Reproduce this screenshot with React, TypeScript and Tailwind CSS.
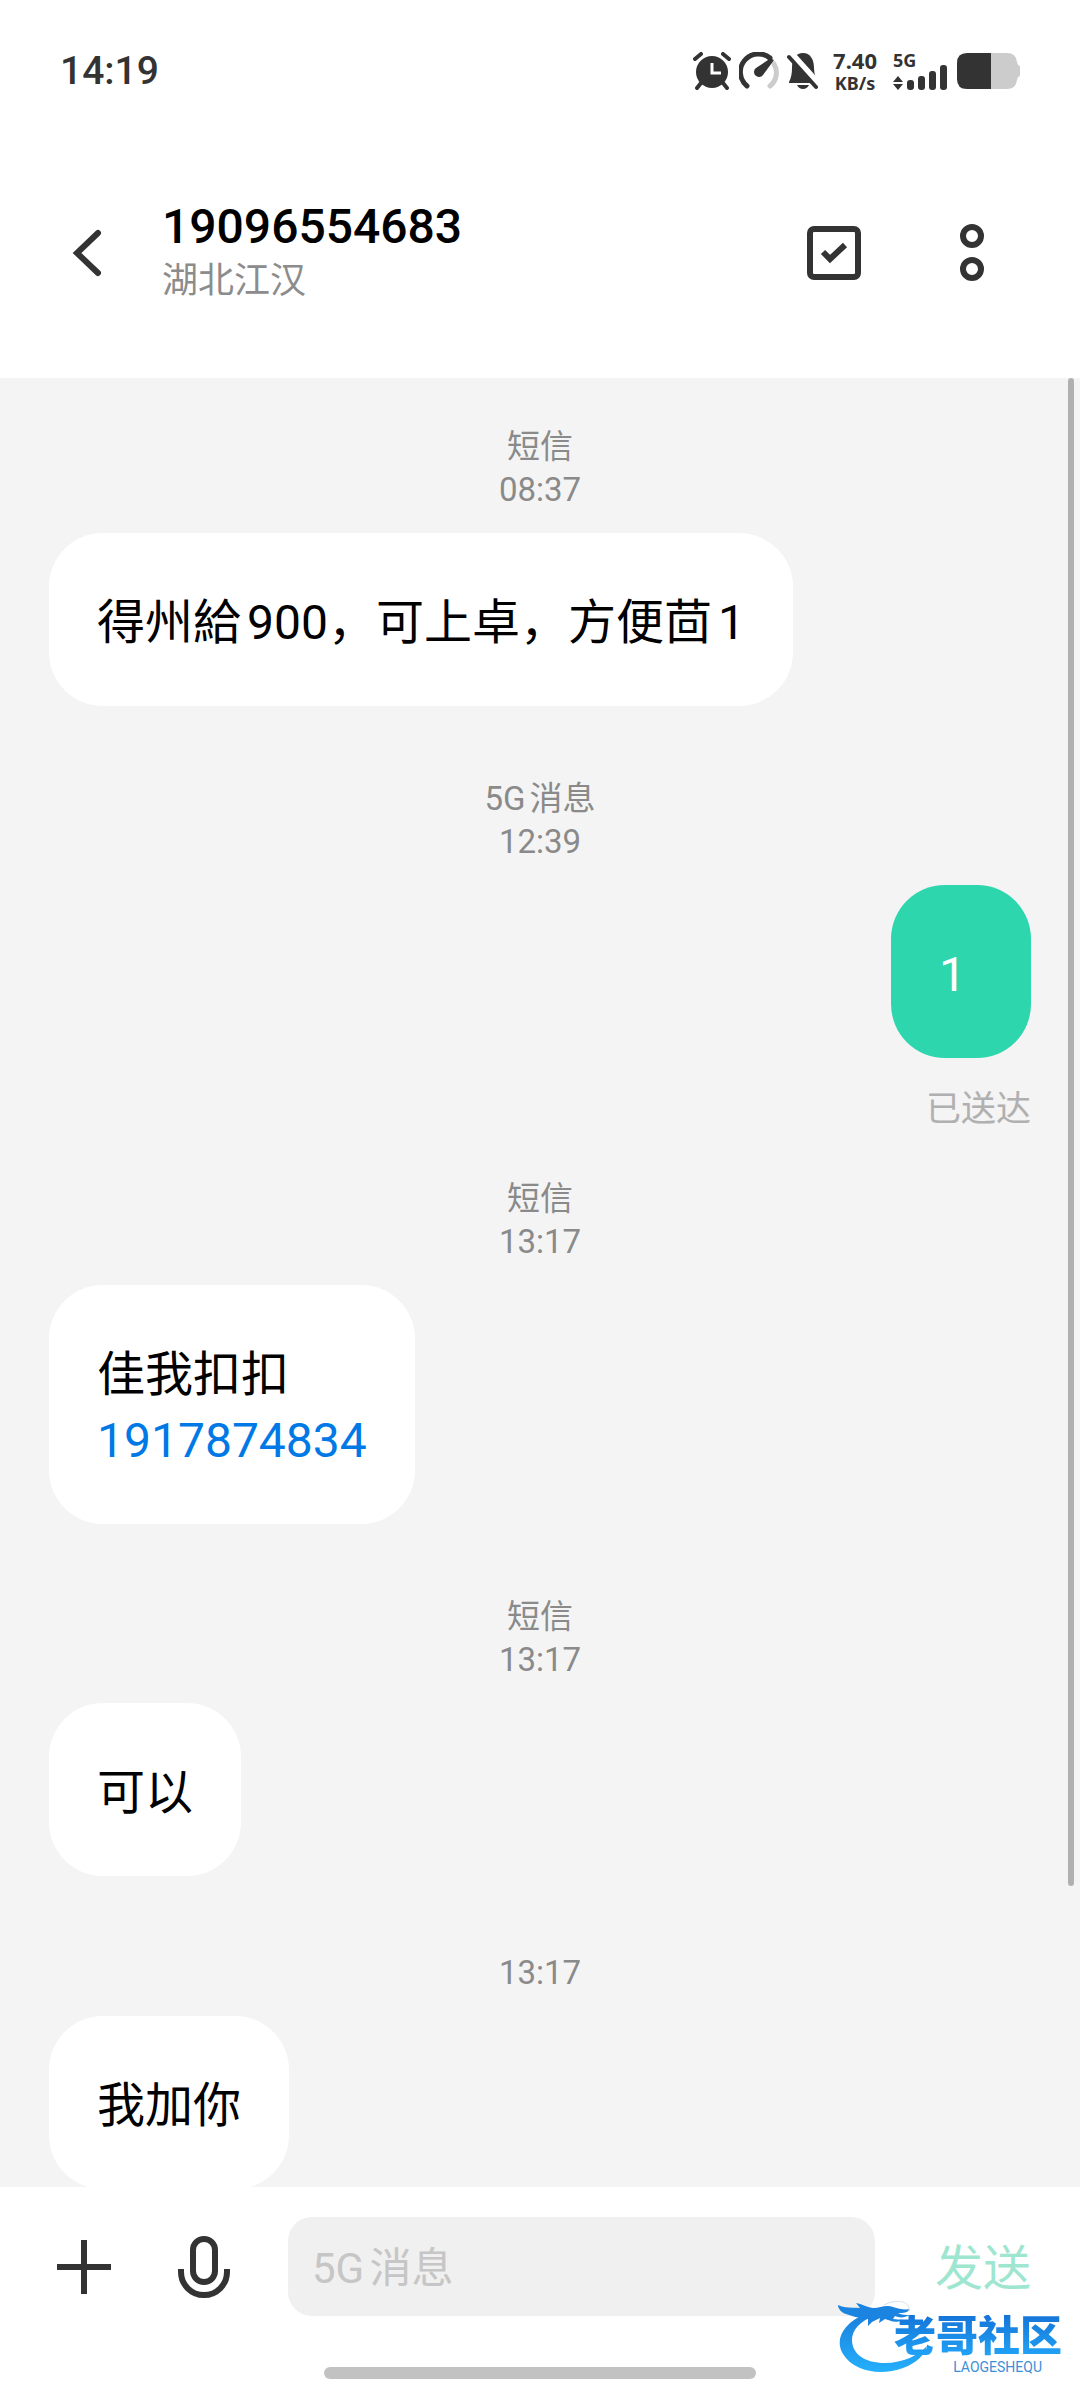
import React, { useState } from 'react';

interface Message {
  id: number;
  text: string;
  time: string;
  channel?: string;
  link?: string;
  sent?: boolean;
  status?: string;
}

const messages: Message[] = [
  { id: 1, channel: '短信', time: '08:37', text: '得州給900，可上卓，方便茴1' },
  { id: 2, channel: '5G消息', time: '12:39', text: '1', sent: true, status: '已送达' },
  { id: 3, channel: '短信', time: '13:17', text: '佳我扣扣', link: '1917874834' },
  { id: 4, channel: '短信', time: '13:17', text: '可以' },
  { id: 5, time: '13:17', text: '我加你' },
];

const StatusBar = () => (
  <div className="flex h-[142px] shrink-0 items-center justify-between px-[60px] text-[#333]">
    <span className="text-[39px] font-medium leading-none">14:19</span>
    <div className="flex items-center">
      <svg width="38" height="38" viewBox="0 0 38 38" fill="none" stroke="#333">
        <circle cx="19" cy="20" r="16" fill="#333" stroke="none" />
        <path d="M8 31l-4 5M30 31l4 5" strokeWidth="4" strokeLinecap="round" />
        <path d="M2 7l6-5M36 7l-6-5" strokeWidth="4" strokeLinecap="round" />
        <path d="M19 11v10h9" stroke="#fff" strokeWidth="3" />
      </svg>
      <svg className="ml-2" width="40" height="38" viewBox="0 0 40 38" fill="none">
        <path d="M8 34A17 17 0 0 1 31 6" stroke="#333" strokeWidth="5" strokeLinecap="round" />
        <path d="M35 12A17 17 0 0 1 31 34" stroke="#ccc" strokeWidth="5" strokeLinecap="round" />
        <path d="M28 5L35 8L24 23a5 5 0 1 1-7-7L29 8z" fill="#333" />
      </svg>
      <svg className="ml-2" width="32" height="38" viewBox="0 0 32 38" fill="none">
        <path d="M2 30c2-4 3-8 3-14C5 7 9 1 16 1s11 6 11 15c0 6 2 10 4 13v2H2z" fill="#333" />
        <path d="M10 33h12q-2 4-6 4t-6-4z" fill="#333" />
        <path d="M5 2l28 31" stroke="#fff" strokeWidth="6" />
        <path d="M2 5l27 30" stroke="#333" strokeWidth="4" strokeLinecap="round" />
      </svg>
      <div className="ml-[14px] mr-[16px] flex flex-col items-center font-['Noto_Sans'] text-[22px] font-bold leading-[24px]">
        <span>7.40</span>
        <span className="text-[18px] leading-[22px]">KB/s</span>
      </div>
      <div className="flex flex-col gap-[1px]">
        <span className="font-['Noto_Sans'] text-[18px] font-bold leading-[14px]">5G</span>
        <svg className="-mt-1" width="55" height="26" viewBox="0 0 55 26" fill="#333">
          <path d="M5 12l5 6H0zM5 26l5-6H0z" />
          <rect x="14" y="16" width="7" height="10" rx="3" />
          <rect x="25" y="12" width="7" height="14" rx="3" />
          <rect x="36" y="7" width="7" height="19" rx="3" />
          <rect x="47" y="1" width="7" height="25" rx="3" />
        </svg>
      </div>
      <svg className="ml-[9px]" width="63" height="36" viewBox="0 0 63 36">
        <path d="M33 0h17q9 0 10 9l1 3q2 0 2 2v8q0 2-2 2l-1 3q-1 9-10 9H33z" fill="#ccc" />
        <path d="M10 0h24v36H10Q0 36 0 26V10Q0 0 10 0z" fill="#333" />
      </svg>
    </div>
  </div>
);

const Header = () => (
  <header className="mb-[14px] flex h-[222px] shrink-0 items-center pl-[70px] pr-[84px]">
    <button type="button" aria-label="返回" className="mr-[58px]">
      <svg width="34" height="48" viewBox="0 0 34 48" fill="none" stroke="#333" strokeWidth="6">
        <path d="M28 4L7 24l21 20" strokeLinecap="round" />
      </svg>
    </button>
    <div className="flex-1 pt-[2px]">
      <h1 className="text-[48px] font-medium leading-[54px] text-black">19096554683</h1>
      <p className="text-[36px] leading-[54px] text-[#8c8c8c]">湖北江汉</p>
    </div>
    <button type="button" aria-label="选择" className="mr-[87px]">
      <svg width="54" height="54" viewBox="0 0 54 54" fill="none" stroke="#333">
        <rect x="3" y="3" width="48" height="48" rx="4" strokeWidth="6" />
        <path d="M16 26l7 7 15-14" strokeWidth="6" />
      </svg>
    </button>
    <button type="button" aria-label="更多" className="px-3">
      <svg width="24" height="58" viewBox="0 0 24 58" fill="none" stroke="#333" strokeWidth="6">
        <circle cx="12" cy="12" r="9" />
        <circle cx="12" cy="45" r="9" />
      </svg>
    </button>
  </header>
);

const MessageItem: React.FC<{ message: Message }> = ({ message }) => {
  const { channel, time, text, link, sent, status } = message;

  return (
    <li className={`flex flex-col ${sent ? 'items-end' : 'items-start'} ${channel ? 'pt-[72px]' : 'pt-[75px]'}`}>
      <div className="mb-[21px] flex flex-col self-center text-center text-[#8a8a8a]">
        {channel && <span className="text-[33px] leading-[42px]">{channel}</span>}
        <time className="text-[33px] leading-[44px]">{time}</time>
      </div>
      <div
        className={`flex min-w-[140px] flex-col rounded-[54px] px-12 pb-[50px] pt-[57px] text-[48px] leading-[66px] ${
          sent ? 'bg-[#2dd6ad] text-white' : 'bg-white text-black'
        }`}
      >
        <span>{text}</span>
        {link && <a href={`tel:${link}`} className="text-[#0079e6]">{link}</a>}
      </div>
      {status && <span className="-mb-[30px] mt-[26px] text-[35px] leading-[52px] text-[#b0b0b0]">{status}</span>}
    </li>
  );
};

const Watermark = () => (
  <div className="pointer-events-none absolute right-[18px] top-[114px] flex h-[76px] w-[224px] flex-col items-end pt-[14px]">
    <svg className="absolute inset-0" width="224" height="76" viewBox="0 0 224 76" fill="none">
      <defs>
        <linearGradient id="ring" x1="0" y1="0" x2="0" y2="1">
          <stop offset="0" stopColor="#1a7fdc" />
          <stop offset="1" stopColor="#24b0fb" />
        </linearGradient>
      </defs>
      <path
        d="M27 13C6 22-4 38 5 53c11 18 38 22 60 14 14-5 22-14 24-22-8 9-24 17-42 17-20 0-33-9-33-23 0-10 8-19 22-24z"
        fill="url(#ring)"
      />
      <path
        d="M0 4c8 4 14 2 22 3l-4-5c6 1 10 4 17 5 8 0 12-4 20-1 6 2 12 3 17 2-2 4-7 4-12 4 4 2 8 2 11 2-4 3-10 3-14 1l-2 3 10 1c-8 4-14 0-18-1l-6 4 1-5-8 4-4 4 0-7c-10-1-16-3-22-5-4-1-8-5-8-9z"
        fill="#1b84e0"
      />
      <path d="M46 4C58-2 72-1 71 10" stroke="#cfe0ee" strokeWidth="1" />
    </svg>
    <span className="relative bg-gradient-to-b from-[#1674d8] to-[#23a6f8] bg-clip-text text-[42px] font-black leading-[44px] text-transparent">
      老哥社区
    </span>
    <span className="relative mr-[20px] text-[14px] leading-[16px] text-[#3d8fd8]">LAOGESHEQU</span>
  </div>
);

const Composer = () => {
  const [draft, setDraft] = useState('');

  return (
    <footer className="relative flex h-[213px] shrink-0 flex-col items-center justify-between bg-white pb-[21px] pt-[30px]">
      <div className="flex h-[99px] w-full items-center pl-[57px] pr-[49px]">
        <button type="button" aria-label="添加">
          <svg width="54" height="54" viewBox="0 0 54 54" stroke="#333" strokeWidth="6">
            <path d="M0 27h54M27 0v54" />
          </svg>
        </button>
        <button type="button" aria-label="语音" className="ml-[67px]">
          <svg width="52" height="62" viewBox="0 0 52 62" fill="none" stroke="#333" strokeWidth="6">
            <rect x="15" y="3" width="22" height="43" rx="11" />
            <path d="M3 33v3a23 23 0 0 0 46 0v-3" />
          </svg>
        </button>
        <input
          type="text"
          aria-label="5G消息"
          placeholder="5G消息"
          value={draft}
          onChange={(e) => setDraft(e.target.value)}
          className="ml-[58px] h-full min-w-0 flex-1 rounded-[24px] bg-[#f0f0f0] px-6 pt-1 text-[42px] text-black outline-none placeholder:text-[#c6c6c6]"
        />
        <button type="button" className="ml-[60px] pt-1 text-[48px] leading-[66px] text-[#9ee6cf]">发送</button>
      </div>
      <div className="h-3 w-2/5 rounded-full bg-[#c2c2c2]" />
      <Watermark />
    </footer>
  );
};

const App: React.FC = () => {
  return (
    <div className="flex h-screen flex-col bg-white font-[Roboto,'Noto_Sans_CJK_SC',sans-serif] [text-autospace:normal]">
      <StatusBar />
      <Header />
      <main className="relative min-h-0 flex-1 overflow-hidden bg-[#f4f4f4]">
        <ul className="-mt-6 px-[49px]">
          {messages.map((message) => (
            <MessageItem key={message.id} message={message} />
          ))}
        </ul>
        <div className="absolute right-[6px] top-0 h-5/6 w-[6px] rounded-full bg-[#b0b0b0]" />
      </main>
      <Composer />
    </div>
  );
};

export default App;
